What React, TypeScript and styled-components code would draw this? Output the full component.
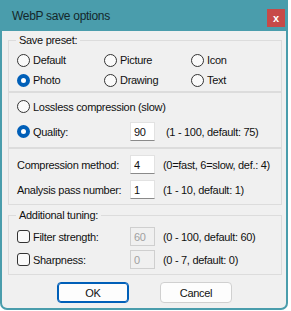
import { createGlobalStyle, styled } from "styled-components";

const GlobalStyle = createGlobalStyle`
  html, body {
    margin: 0;
    padding: 0;
    background: #ffffff;
  }
  body {
    font-family: "Liberation Sans", Arial, sans-serif;
    font-size: 11px;
    letter-spacing: -0.3px;
    color: #111;
  }
`;

const presets = ["Default", "Picture", "Icon", "Photo", "Drawing", "Text"];

const App = () => {
  return (
    <>
      <GlobalStyle />
      <Window>
        <TitleBar>
          <Title>WebP save options</Title>
          <CloseBtn>x</CloseBtn>
        </TitleBar>
        <Body>
          <Group $h={60}>
            <Legend>Save preset:</Legend>
            <PresetGrid>
              {presets.map((p) => (
                <Option key={p}>
                  <Radio $checked={p === "Photo"} />
                  {p}
                </Option>
              ))}
            </PresetGrid>
          </Group>

          <Group $h={56}>
            <Rows $row={25} $pad={1}>
              <Option>
                <Radio $checked={false} />
                Lossless compression (slow)
              </Option>
              <FieldRow>
                <Option>
                  <Radio $checked />
                  Quality:
                </Option>
                <Edit value="90" readOnly />
                <Hint>(1 - 100, default: 75)</Hint>
              </FieldRow>
            </Rows>
          </Group>

          <Group $h={57}>
            <Rows $row={25} $pad={3}>
              <FieldRow>
                <Label>Compression method:</Label>
                <Edit value="4" readOnly />
                <Hint $gap={8}>(0=fast, 6=slow, def.: 4)</Hint>
              </FieldRow>
              <FieldRow>
                <Label>Analysis pass number:</Label>
                <Edit value="1" readOnly />
                <Hint $gap={8}>(1 - 10, default: 1)</Hint>
              </FieldRow>
            </Rows>
          </Group>

          <Group $h={68} $top={2}>
            <Legend>Additional tuning:</Legend>
            <Rows $row={23} $pad={2}>
              <FieldRow>
                <Option>
                  <Check />
                  Filter strength:
                </Option>
                <Edit value="60" readOnly disabled />
                <Hint $gap={8}>(0 - 100, default: 60)</Hint>
              </FieldRow>
              <FieldRow>
                <Option>
                  <Check />
                  Sharpness:
                </Option>
                <Edit value="0" readOnly disabled />
                <Hint $gap={8}>(0 - 7, default: 0)</Hint>
              </FieldRow>
            </Rows>
          </Group>

          <Buttons>
            <Button $primary>OK</Button>
            <Button>Cancel</Button>
          </Buttons>
        </Body>
      </Window>
    </>
  );
};

export default App;

const Window = styled.div`
  width: 288px;
  height: 310px;
  box-sizing: border-box;
  padding: 0 2px 2px 2px;
  background: #4a9dac;
  border-radius: 0 0 7px 7px;
  display: flex;
  flex-direction: column;
`;

const TitleBar = styled.div`
  height: 31px;
  display: flex;
  align-items: center;
  justify-content: space-between;
  padding: 0 1px 0 10px;
`;

const Title = styled.span`
  font-size: 12px;
  color: #14272a;
`;

const CloseBtn = styled.div`
  width: 18px;
  height: 18px;
  background: #c74a48;
  color: #fff;
  font-size: 11px;
  font-weight: bold;
  letter-spacing: 0;
  display: flex;
  align-items: center;
  justify-content: center;
  margin-top: 4px;
`;

const Body = styled.div`
  flex: 1;
  background: #f0f0f0;
  border-radius: 0 0 5px 5px;
  padding: 1px 4px 0 6px;
  display: flex;
  flex-direction: column;
`;

const Group = styled.fieldset<{ $h: number; $top?: number }>`
  margin: ${(p) => p.$top ?? 0}px 0 0 0;
  padding: 0 8px 0 8px;
  height: ${(p) => p.$h}px;
  box-sizing: border-box;
  border: 1px solid #dcdcdc;
  min-width: 0;
  width: 274px;
`;

const Legend = styled.legend`
  padding: 0 3px;
  margin-left: -1px;
  line-height: 16px;
`;

const PresetGrid = styled.div`
  display: grid;
  grid-template-columns: 87px 87px 1fr;
  grid-auto-rows: 20px;
  padding-top: 2px;
`;

const Rows = styled.div<{ $row: number; $pad: number }>`
  display: grid;
  grid-auto-rows: ${(p) => p.$row}px;
  padding-top: ${(p) => p.$pad}px;
`;

const Option = styled.div`
  display: flex;
  align-items: center;
  gap: 3px;
  white-space: nowrap;
`;

const Radio = styled.span<{ $checked: boolean }>`
  width: 13px;
  height: 13px;
  box-sizing: border-box;
  border-radius: 50%;
  flex-shrink: 0;
  background: ${(p) => (p.$checked ? "#fff" : "#fafafa")};
  border: ${(p) => (p.$checked ? "4px solid #005fb8" : "1px solid #333")};
`;

const Check = styled.span`
  width: 13px;
  height: 13px;
  box-sizing: border-box;
  border: 1px solid #333;
  border-radius: 3px;
  background: #fafafa;
  flex-shrink: 0;
`;

const FieldRow = styled.div`
  display: grid;
  grid-template-columns: 113px 25px auto;
  align-items: center;
`;

const Label = styled.span`
  white-space: nowrap;
`;

const Edit = styled.input`
  width: 25px;
  height: 19px;
  box-sizing: border-box;
  padding: 0 3px;
  font: inherit;
  letter-spacing: inherit;
  color: #111;
  background: #fff;
  border: 1px solid #e2e2e2;
  border-bottom-color: #8a8a8a;
  outline: none;

  &:disabled {
    background: #f0f0f0;
    color: #a0a0a0;
    border-color: #cfcfcf;
  }
`;

const Hint = styled.span<{ $gap?: number }>`
  margin-left: ${(p) => p.$gap ?? 11}px;
  white-space: nowrap;
`;

const Buttons = styled.div`
  display: flex;
  gap: 31px;
  padding: 7px 0 0 49px;
`;

const Button = styled.button<{ $primary?: boolean }>`
  width: 72px;
  height: 21px;
  font: inherit;
  letter-spacing: inherit;
  color: #111;
  background: #fdfdfd;
  border-radius: 4px;
  border: 1px solid ${(p) => (p.$primary ? "#005fb8" : "#d0d0d0")};
  box-shadow: ${(p) => (p.$primary ? "inset 0 0 0 1px #005fb8" : "none")};
  padding: 0;
`;
